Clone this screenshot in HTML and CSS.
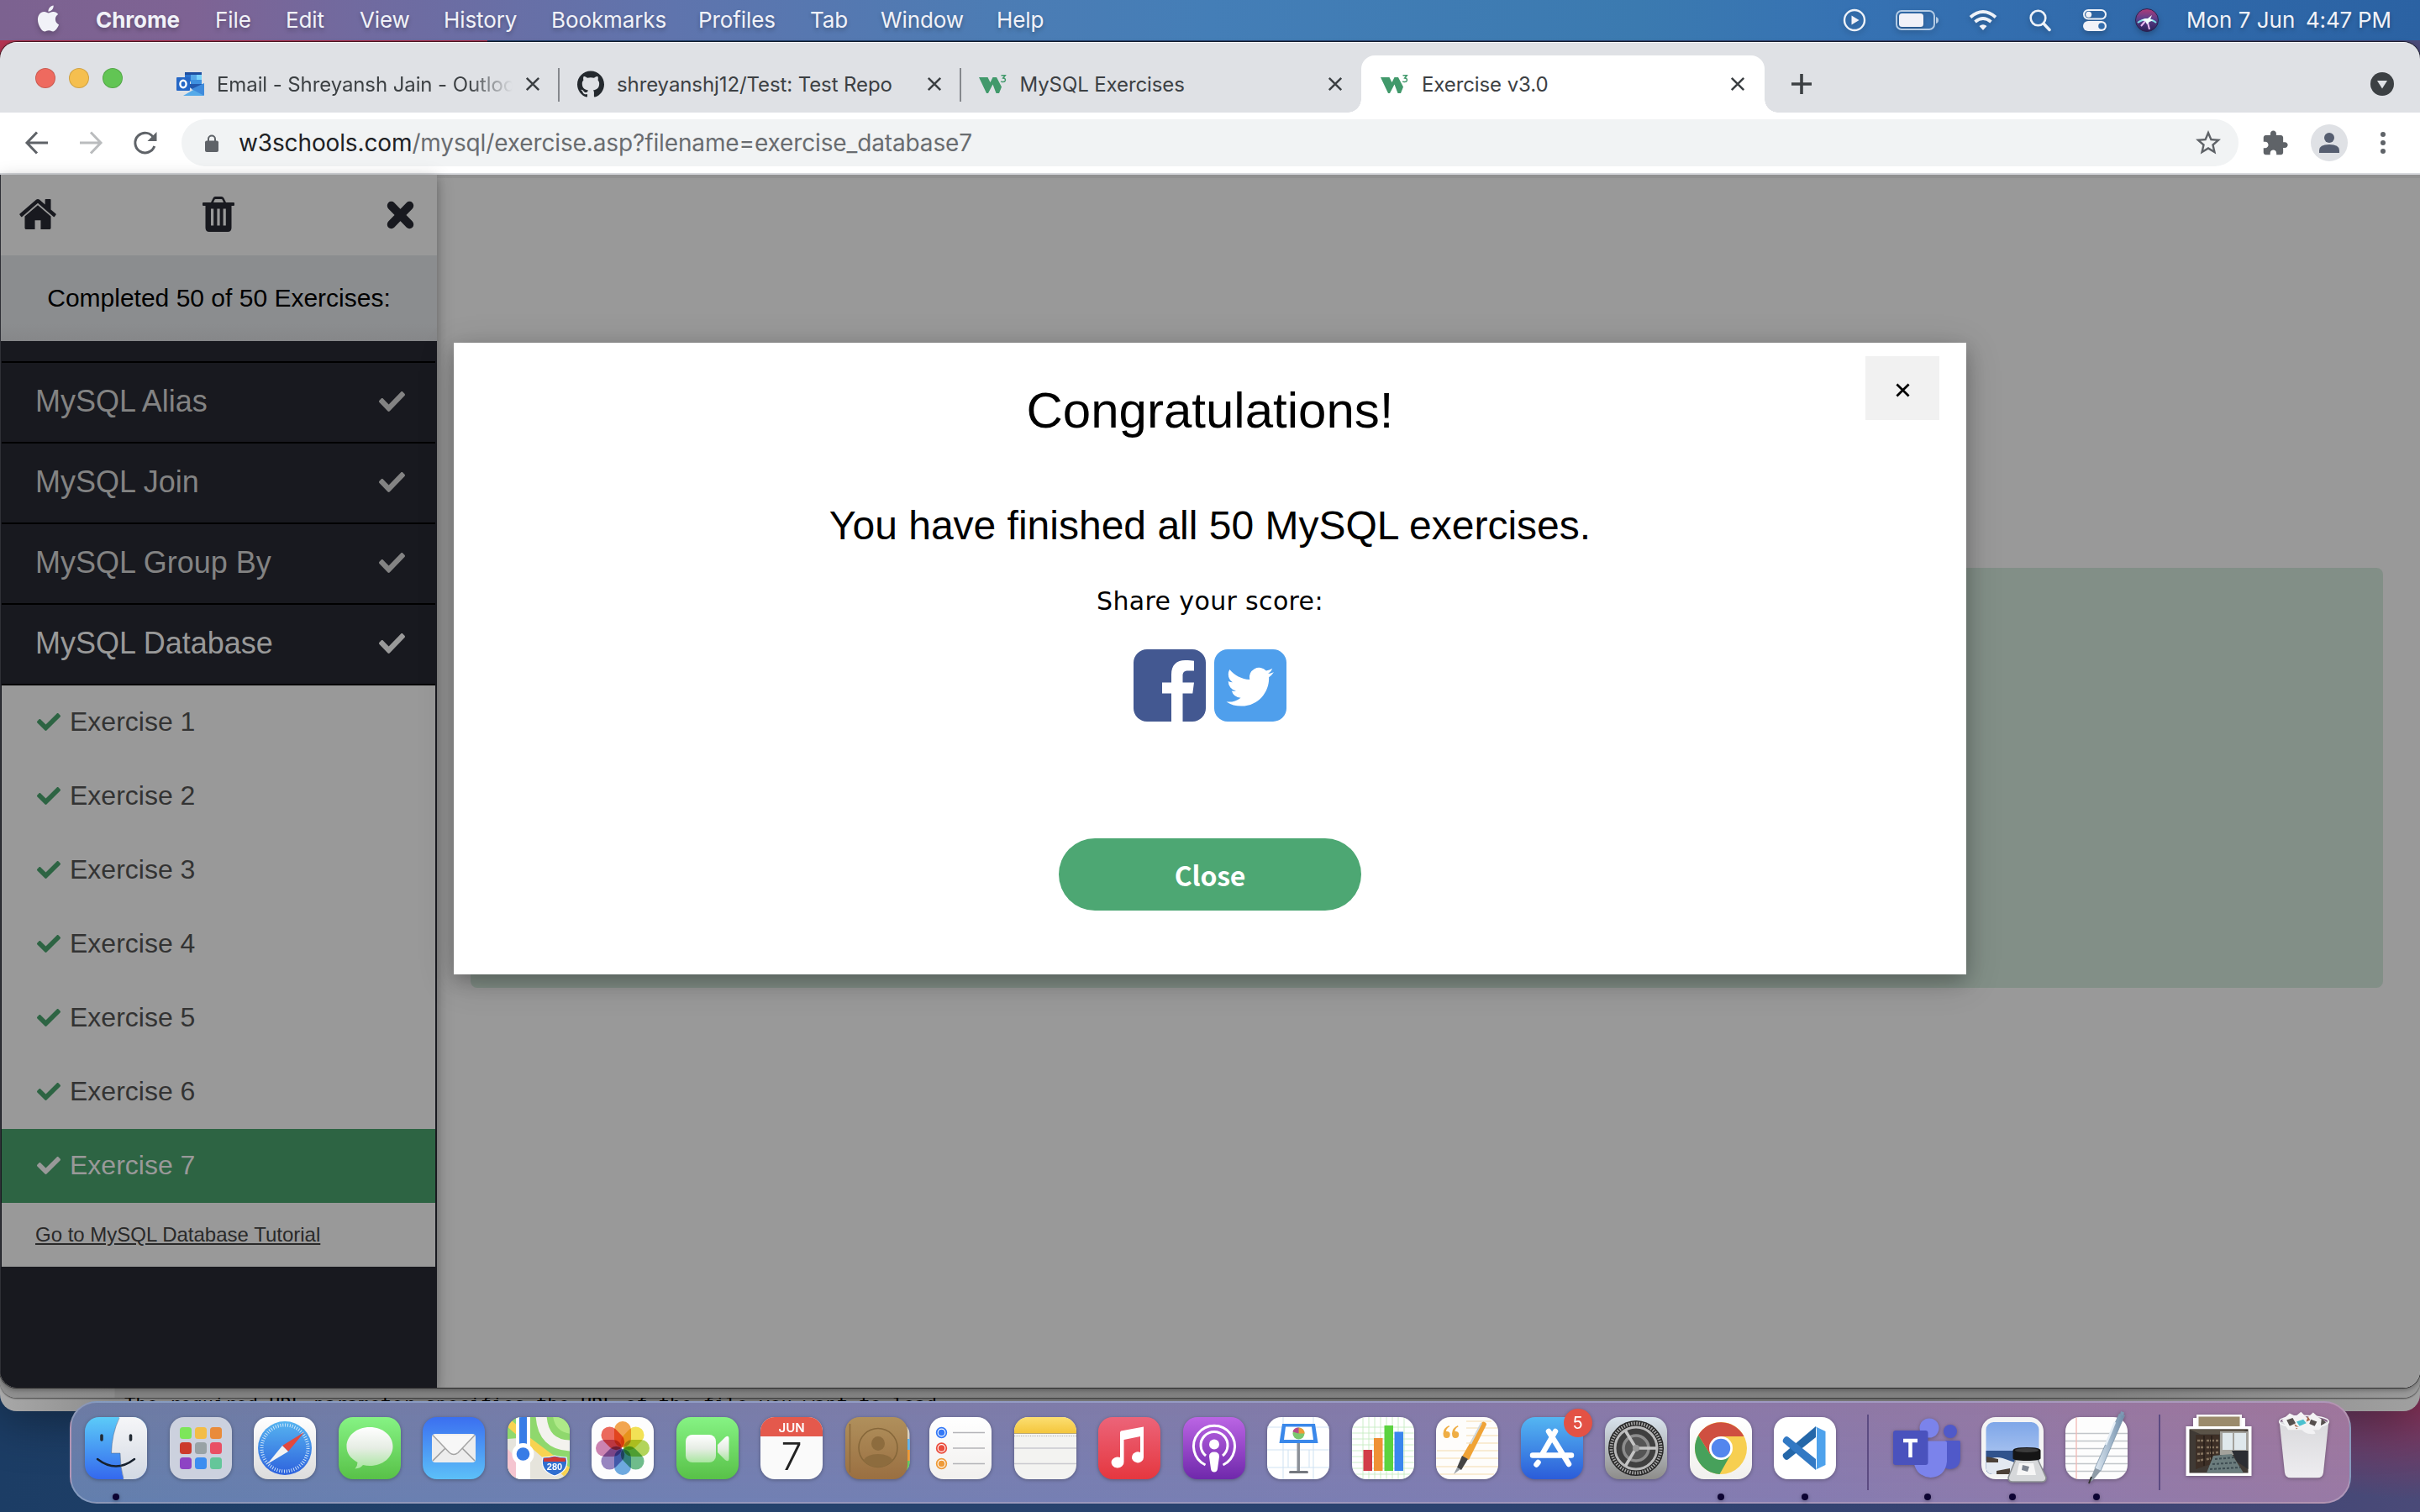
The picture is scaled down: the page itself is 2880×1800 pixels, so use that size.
FILE: index.html
```html
<!DOCTYPE html>
<html lang="en">
<head>
<meta charset="utf-8">
<title>Exercise v3.0</title>
<link rel="stylesheet" href="styles.css">
</head>
<body>
<svg class="defs" aria-hidden="true">
  <defs>
    <symbol id="check" viewBox="0 65 512 382" preserveAspectRatio="none"><path d="M173.898 439.404l-166.4-166.4c-9.997-9.997-9.997-26.206 0-36.204l36.203-36.204c9.997-9.998 26.207-9.998 36.204 0L192 312.69 432.095 72.596c9.997-9.997 26.207-9.997 36.204 0l36.203 36.204c9.997 9.997 9.997 26.206 0 36.204l-294.4 294.401c-9.998 9.997-26.207 9.997-36.204-.001z"/></symbol>
    <symbol id="cross" viewBox="0 0 20 20"><path d="M2 2L18 18M18 2L2 18" fill="none" stroke="currentColor" stroke-width="2.8"/></symbol>
    <symbol id="w3" viewBox="0 0 34 28"><path d="M0 6h10.500l3 6 3-6h4.500l6 11.500-3 7.500h-3.500l-4-10.500-5.500 10.500H9z"/><path d="M26.500 3.700h4.800l-2.600 3.300q3.100.3 2.700 2.700-.5 2-3 1.900-1.400-.1-2.200-.9" fill="none" stroke="currentColor" stroke-width="1.500"/></symbol>
    <linearGradient id="gFinder" x2="0" y2="1"><stop offset="0" stop-color="#5ccbf8"/><stop offset="1" stop-color="#3468ee"/></linearGradient>
    <linearGradient id="gFace" x2="0" y2="1"><stop offset="0" stop-color="#f6f6f8"/><stop offset="1" stop-color="#d2d9e3"/></linearGradient>
    <linearGradient id="gWhite" x2="0" y2="1"><stop offset="0" stop-color="#fff"/><stop offset="1" stop-color="#dcdcdc"/></linearGradient>
    <linearGradient id="gPaper" x2="0" y2="1"><stop offset="0" stop-color="#fff"/><stop offset="1" stop-color="#f1f0ee"/></linearGradient>
    <linearGradient id="gGreen" x2="0" y2="1"><stop offset="0" stop-color="#86f384"/><stop offset="1" stop-color="#58c148"/></linearGradient>
    <linearGradient id="gBubble" x2="0" y2="1"><stop offset="0" stop-color="#fff"/><stop offset=".5" stop-color="#e6ede4"/><stop offset="1" stop-color="#a9e6a0"/></linearGradient>
    <linearGradient id="gMail" x2="0" y2="1"><stop offset="0" stop-color="#3b6ff0"/><stop offset="1" stop-color="#5cc0f8"/></linearGradient>
    <linearGradient id="gDial" x2="0" y2="1"><stop offset="0" stop-color="#56b4f0"/><stop offset="1" stop-color="#2e62dd"/></linearGradient>
    <linearGradient id="gBook" x2="0" y2="1"><stop offset="0" stop-color="#b0905c"/><stop offset="1" stop-color="#9a6f41"/></linearGradient>
    <linearGradient id="gNote" x2="0" y2="1"><stop offset="0" stop-color="#fcdf72"/><stop offset="1" stop-color="#f4c63c"/></linearGradient>
    <linearGradient id="gMusic" x2="0" y2="1"><stop offset="0" stop-color="#ec6479"/><stop offset="1" stop-color="#e5373f"/></linearGradient>
    <linearGradient id="gPod" x2="0" y2="1"><stop offset="0" stop-color="#bb65e4"/><stop offset="1" stop-color="#6f28ab"/></linearGradient>
    <linearGradient id="gStore" x2="0" y2="1"><stop offset="0" stop-color="#54b6f2"/><stop offset="1" stop-color="#2b5cd9"/></linearGradient>
    <linearGradient id="gPref" x2="0" y2="1"><stop offset="0" stop-color="#d9e4ee"/><stop offset="1" stop-color="#8d8c8a"/></linearGradient>
    <linearGradient id="gSky" x2="0" y2="1"><stop offset="0" stop-color="#7ea6e8"/><stop offset="1" stop-color="#bed2f4"/></linearGradient>
    <linearGradient id="gPen" x2="1" y2="0"><stop offset="0" stop-color="#dfe9f2"/><stop offset="1" stop-color="#6b8aa8"/></linearGradient>
    <linearGradient id="gBin" x2="0" y2="1"><stop offset="0" stop-color="#d9d9dc"/><stop offset="1" stop-color="#eeedf0"/></linearGradient>
    <linearGradient id="gSiri" x2="0" y2="1"><stop offset="0" stop-color="#b03a78"/><stop offset=".45" stop-color="#5a3f8c"/><stop offset="1" stop-color="#2b1f55"/></linearGradient>
    <clipPath id="tile"><rect width="74" height="74" rx="17"/></clipPath>
  </defs>
</svg>

<div class="desktop">
  <header class="menubar">
    <svg class="apple" viewBox="1.500 0 21 24"><path d="M12.152 6.896c-.948 0-2.415-1.078-3.960-1.040-2.040.027-3.910 1.183-4.961 3.014-2.117 3.675-.546 9.103 1.519 12.090 1.013 1.454 2.208 3.090 3.792 3.039 1.520-.065 2.090-.987 3.935-.987 1.831 0 2.350.987 3.960.948 1.637-.026 2.676-1.480 3.676-2.948 1.156-1.688 1.636-3.325 1.662-3.415-.039-.013-3.182-1.221-3.220-4.857-.026-3.040 2.480-4.494 2.597-4.559-1.429-2.090-3.623-2.324-4.390-2.376-2-.156-3.675 1.090-4.610 1.090zM15.530 3.830c.843-1.012 1.400-2.427 1.245-3.830-1.207.052-2.662.805-3.532 1.818-.780.896-1.454 2.338-1.273 3.714 1.338.104 2.715-.688 3.559-1.701"/></svg>
    <nav class="menus"><span class="app">Chrome</span><span>File</span><span>Edit</span><span>View</span><span>History</span><span>Bookmarks</span><span>Profiles</span><span>Tab</span><span>Window</span><span>Help</span></nav>
    <div class="status">
      <svg width="28" height="28" viewBox="0 0 28 28"><circle cx="14" cy="14" r="12" fill="none" stroke="#eef2f8" stroke-width="2.400"/><path d="M10.500 8.500v11l9-5.500z"/></svg>
      <svg class="s-batt" width="52" height="24" viewBox="0 0 52 24"><rect x="1" y="1" width="45" height="22" rx="6" fill="none" stroke="#b3cbe4" stroke-width="2"/><rect x="4" y="4" width="29" height="16" rx="3.500"/><path d="M48 8q3 1 3 4t-3 4z" fill="#b3cbe4"/></svg>
      <svg class="s-wifi" width="34" height="24" viewBox="0 0 34 24"><path d="M17 24l-4.500-5q4.500-3.500 9 0z"/><path d="M2 8.500q15-13 30 0M7.500 14q9.500-8 19 0" fill="none" stroke="#eef2f8" stroke-width="3.800"/></svg>
      <svg class="s-find" width="26" height="26" viewBox="0 0 26 26"><circle cx="10.500" cy="10.500" r="8.800" fill="none" stroke="#eef2f8" stroke-width="2.600"/><path d="M17 17l7 7.500" stroke="#eef2f8" stroke-width="3.500" stroke-linecap="round"/></svg>
      <svg class="s-ctl" width="28" height="26" viewBox="0 0 28 26"><rect x="1" y="1" width="26" height="10.500" rx="5.200" fill="none" stroke="#eef2f8" stroke-width="2"/><circle cx="6.700" cy="6.200" r="3.500"/><rect y="14" width="28" height="12" rx="6"/><circle cx="22" cy="20" r="3.800" fill="#336cab"/></svg>
      <svg class="s-siri" width="28" height="28" viewBox="0 0 28 28"><circle cx="14" cy="14" r="13.500" fill="url(#gSiri)" stroke="#2a2350"/><path d="M3 17Q9 13 14 13Q20 13 25 17" stroke="#7fe0e6" stroke-width="2" fill="none"/><path d="M14 13L7 21M14 13l3 12" stroke="#e9b9f0" stroke-width="2" fill="none"/><path d="M15 12l5-4-2 5 4 1-5 2-3 3-2-4-5-1 5-2z" fill="#effffd"/></svg>
      <span class="date">Mon 7 Jun</span><span class="time">4:47 PM</span>
    </div>
  </header>

  <div class="window back2"><p>The required URL parameter specifies the URL of the file you want to load</p></div>
  <div class="window back1"></div>

  <section class="window browser">
    <div class="tabstrip">
      <div class="lights"><i class="red"></i><i class="amber"></i><i class="green"></i></div>
      <div class="tab">
        <svg width="33" height="28" viewBox="0 0 33 28"><path fill="#1f4fa0" d="M10 0h20v8H10z"/><path fill="#2a72cf" d="M10 3h10v8H10z"/><path fill="#56a7e8" d="M17 3h7v6h-7z"/><path fill="#7bd3fb" d="M24 3h6v7h-6z"/><path fill="#3f91e0" d="M17 9h13v9H17z"/><path fill="#2258ad" d="M10 14h22l-12 7z"/><path fill="#55aae9" d="M8 28h24V14z"/><path fill="#3f8bdc" d="M33 13v15L18 20z"/><rect y="6" width="16" height="16" rx="1" fill="#2567c6"/><ellipse cx="8" cy="14" rx="3.600" ry="4.200" fill="none" stroke="#fff" stroke-width="2.400"/></svg>
        <span class="title fade">Email - Shreyansh Jain - Outlook</span><svg class="x"><use href="#cross"/></svg>
      </div>
      <div class="tab ruled">
        <svg width="32" height="32" viewBox="0 0 24 24" fill="#24292e"><path d="M12 .297c-6.630 0-12 5.373-12 12 0 5.303 3.438 9.800 8.205 11.385.6.113.82-.258.82-.577 0-.285-.01-1.040-.015-2.040-3.338.724-4.042-1.610-4.042-1.610C4.422 18.070 3.633 17.700 3.633 17.700c-1.087-.744.084-.729.084-.729 1.205.084 1.838 1.236 1.838 1.236 1.070 1.835 2.809 1.305 3.495.998.108-.776.417-1.305.76-1.605-2.665-.3-5.466-1.332-5.466-5.930 0-1.310.465-2.380 1.235-3.220-.135-.303-.54-1.523.105-3.176 0 0 1.005-.322 3.300 1.230.96-.267 1.980-.399 3-.405 1.020.006 2.040.138 3 .405 2.280-1.552 3.285-1.230 3.285-1.230.645 1.653.24 2.873.12 3.176.765.84 1.230 1.910 1.230 3.220 0 4.610-2.805 5.625-5.475 5.920.42.36.81 1.096.81 2.220 0 1.606-.015 2.896-.015 3.286 0 .315.21.69.825.57C20.565 22.092 24 17.592 24 12.297c0-6.627-5.373-12-12-12"/></svg>
        <span class="title">shreyanshj12/Test: Test Repo</span><svg class="x"><use href="#cross"/></svg>
      </div>
      <div class="tab ruled">
        <svg class="w3" width="34" height="28"><use href="#w3"/></svg>
        <span class="title">MySQL Exercises</span><svg class="x"><use href="#cross"/></svg>
      </div>
      <div class="tab active">
        <svg class="w3" width="34" height="28"><use href="#w3"/></svg>
        <span class="title">Exercise v3.0</span><svg class="x"><use href="#cross"/></svg>
      </div>
      <svg class="plus" width="24" height="24" viewBox="0 0 24 24"><path d="M12 0v24M0 12h24" stroke="#3c4043" stroke-width="3.600"/></svg>
      <svg class="drop" width="28" height="28" viewBox="0 0 28 28"><circle cx="14" cy="14" r="14" fill="#3c4043"/><path d="M8 10h12l-6 9.500z" fill="#dfe1e5"/></svg>
    </div>

    <div class="toolbar">
      <svg class="back" viewBox="0 0 28 28"><path d="M27 14H3M14 1.500L2 14l12 12.500" fill="none" stroke="#5f6368" stroke-width="3"/></svg>
      <svg class="fwd" viewBox="0 0 28 28"><path d="M1 14h24M14 1.500L26 14 14 26.500" fill="none" stroke="#babcbe" stroke-width="3"/></svg>
      <svg class="reload" viewBox="0 0 28 28"><path d="M24 8.300A11.800 11.800 0 1 0 24.800 18" fill="none" stroke="#5f6368" stroke-width="3"/><path d="M27.500 1v11H16.500z" fill="#5f6368"/></svg>
      <div class="omnibox">
        <svg class="lock" viewBox="0 0 16 21"><rect y="7.500" width="16" height="13.500" rx="2" fill="#5f6368"/><path d="M4 8V5.500a4 4 0 0 1 8 0V8" fill="none" stroke="#5f6368" stroke-width="2"/></svg>
        <span class="url"><b>w3schools.com</b>/mysql/exercise.asp?filename=exercise_database7</span>
        <svg class="star" viewBox="0 0 24 24"><path d="M22 9.240l-7.190-.620L12 2 9.190 8.630 2 9.240l5.460 4.730L5.820 21 12 17.270 18.180 21l-1.630-7.030L22 9.240zM12 15.400l-3.760 2.270 1-4.280-3.320-2.880 4.380-.380L12 6.100l1.710 4.040 4.380.380-3.320 2.880 1 4.280L12 15.400z"/></svg>
      </div>
      <svg class="ext" viewBox="0 0 24 24"><path d="M20.500 11H19V7c0-1.100-.9-2-2-2h-4V3.500C13 2.120 11.880 1 10.500 1S8 2.120 8 3.500V5H4c-1.100 0-1.990.9-1.990 2v3.800H3.500c1.490 0 2.700 1.210 2.700 2.700s-1.210 2.700-2.700 2.700H2V20c0 1.100.9 2 2 2h3.800v-1.500c0-1.490 1.210-2.700 2.700-2.700 1.490 0 2.700 1.210 2.700 2.700V22H17c1.100 0 2-.9 2-2v-4h1.500c1.380 0 2.500-1.120 2.500-2.500S21.880 11 20.500 11z"/></svg>
      <svg class="avatar" viewBox="0 0 44 44"><circle cx="22" cy="22" r="22" fill="#dfe1e5"/><circle cx="22" cy="16" r="6" fill="#565e70"/><path d="M10 34v-3q0-7 12-7t12 7v3z" fill="#565e70"/></svg>
      <svg class="dots" viewBox="0 0 6 26"><circle cx="3" cy="3" r="3"/><circle cx="3" cy="13" r="3"/><circle cx="3" cy="23" r="3"/></svg>
    </div>

    <div class="page">
      <aside class="sidebar">
        <div class="tools">
          <svg class="home" viewBox="80 253 1632 1283" preserveAspectRatio="none"><path d="M1472 992v480q0 26-19 45t-45 19h-384v-384h-256v384h-384q-26 0-45-19t-19-45v-480q0-1 .5-3t.5-3l575-474 575 474q1 2 1 6zm223-69l-62 74q-8 9-21 11h-3q-13 0-21-7l-692-577-692 577q-12 8-24 7-13-2-21-11l-62-74q-8-10-7-23.500t11-21.500l719-599q32-26 76-26t76 26l244 204v-195q0-14 9-23t23-9h192q14 0 23 9t9 23v408l219 182q10 8 11 21.500t-7 23.500z"/></svg>
          <svg class="trash" viewBox="0 0 38 42"><path fill-rule="evenodd" d="M0 8q0-1 1-1h9l2.500-5q1-2 3-2h7q2 0 3 2L28 7h9q1 0 1 1v2q0 1-1 1h-2.500v26q0 5-4.500 5H8q-4.500 0-4.500-5V11H1q-1 0-1-1zM13 7h12l-1.500-3.500q-.3-.6-1-.6h-7q-.7 0-1 .6zM10 14.500v20h3.200v-20zM17.400 14.500v20h3.200v-20zM24.600 14.500v20h3.200v-20z"/></svg>
          <svg class="close" viewBox="0 0 32 32" preserveAspectRatio="none"><path d="M5.500 5.500l21 21M26.500 5.500l-21 21" stroke="#18191f" stroke-width="9.500" stroke-linecap="round"/></svg>
        </div>
        <div class="done">Completed 50 of 50 Exercises:</div>
        <div class="stub"></div>
        <div class="topic">MySQL Alias<svg><use href="#check"/></svg></div>
        <div class="topic">MySQL Join<svg><use href="#check"/></svg></div>
        <div class="topic">MySQL Group By<svg><use href="#check"/></svg></div>
        <div class="topic open">MySQL Database<svg><use href="#check"/></svg></div>
        <div class="exercises">
          <div class="ex"><svg><use href="#check"/></svg>Exercise 1</div>
          <div class="ex"><svg><use href="#check"/></svg>Exercise 2</div>
          <div class="ex"><svg><use href="#check"/></svg>Exercise 3</div>
          <div class="ex"><svg><use href="#check"/></svg>Exercise 4</div>
          <div class="ex"><svg><use href="#check"/></svg>Exercise 5</div>
          <div class="ex"><svg><use href="#check"/></svg>Exercise 6</div>
          <div class="ex current"><svg><use href="#check"/></svg>Exercise 7</div>
          <div class="tutorial"><a>Go to MySQL Database Tutorial</a></div>
        </div>
      </aside>
      <main class="main"><div class="panel"></div></main>

      <div class="modal">
        <div class="modal-x"><svg viewBox="0 0 18 18"><path d="M1.500 1.500l15 15M16.500 1.500l-15 15" stroke="#000" stroke-width="2.900"/></svg></div>
        <h1>Congratulations!</h1>
        <h2>You have finished all 50 MySQL exercises.</h2>
        <p>Share your score:</p>
        <div class="share">
          <svg viewBox="0 0 86 86"><rect width="86" height="86" rx="16" fill="#435891"/><path fill="#fff" d="M45 86V52.500H34V39.500h11V30c0-11.500 6.500-17 16.500-17 4.500 0 8 .4 10.500.7v11.800h-7c-5.500 0-6.500 2.500-6.500 6.500v7.500H72l-1.700 13H58.500V86z"/></svg>
          <svg viewBox="0 0 86 86"><rect width="86" height="86" rx="16" fill="#4f9fec"/><path transform="translate(14.500 16.500) scale(2.350)" fill="#fff" d="M23.953 4.570a10 10 0 01-2.825.775 4.958 4.958 0 002.163-2.723c-.951.555-2.005.959-3.127 1.184a4.920 4.920 0 00-8.384 4.482C7.690 8.095 4.067 6.130 1.640 3.162a4.822 4.822 0 00-.666 2.475c0 1.710.870 3.213 2.188 4.096a4.904 4.904 0 01-2.228-.616v.06a4.923 4.923 0 003.946 4.827 4.996 4.996 0 01-2.212.085 4.936 4.936 0 004.604 3.417 9.867 9.867 0 01-6.102 2.105c-.390 0-.779-.023-1.170-.067a13.995 13.995 0 007.557 2.209c9.053 0 13.998-7.496 13.998-13.985 0-.210 0-.420-.015-.630A9.935 9.935 0 0024 4.590z"/></svg>
        </div>
        <button type="button">Close</button>
      </div>
    </div>
  </section>

  <footer class="dock">
    <div class="app-icon running"><svg viewBox="0 0 74 74"><g clip-path="url(#tile)"><rect width="74" height="74" fill="url(#gFinder)"/><path d="M41 0Q32 20 31.500 43h10.500Q42 60 46 74h28V0z" fill="url(#gFace)"/></g><path d="M20 22v5M54.500 22v5" stroke="#222a33" stroke-width="3.600" stroke-linecap="round"/><path d="M15 50q22 17 44 0" fill="none" stroke="#16202c" stroke-width="2.500" stroke-linecap="round"/><path d="M41 1Q32 20 31.500 43H42Q42 60 46 73" fill="none" stroke="#445f85" stroke-opacity=".5" stroke-width="1"/></svg></div>
    <div class="app-icon"><svg viewBox="0 0 74 74"><rect width="74" height="74" rx="17" fill="#ccd1de"/><g><rect x="12" y="12" width="14" height="14" rx="3.500" fill="#7de65a"/><rect x="30" y="12" width="14" height="14" rx="3.500" fill="#f3bd47"/><rect x="48" y="12" width="14" height="14" rx="3.500" fill="#e98b3a"/><rect x="12" y="30" width="14" height="14" rx="3.500" fill="#cc3a2c"/><rect x="30" y="30" width="14" height="14" rx="3.500" fill="#98a2a5"/><rect x="48" y="30" width="14" height="14" rx="3.500" fill="#e95064"/><rect x="12" y="48" width="14" height="14" rx="3.500" fill="#8d43c4"/><rect x="30" y="48" width="14" height="14" rx="3.500" fill="#3c8df0"/><rect x="48" y="48" width="14" height="14" rx="3.500" fill="#64c69a"/></g></svg></div>
    <div class="app-icon"><svg viewBox="0 0 74 74"><rect width="74" height="74" rx="17" fill="url(#gWhite)"/><circle cx="37" cy="37" r="32" fill="url(#gDial)"/><circle cx="37" cy="37" r="27.500" fill="none" stroke="#d9ecfb" stroke-width="4" stroke-dasharray=".9 1.980"/><path d="M60 18L41 41l-7-7z" fill="#e2483d"/><path d="M16 56l18-22 7 7z" fill="#f3f3f3"/></svg></div>
    <div class="app-icon"><svg viewBox="0 0 74 74"><rect width="74" height="74" rx="17" fill="url(#gGreen)"/><path d="M37 12c15.500 0 27.500 10 27.500 23S52.500 58 37 58q-4 0-8-1-3 4-9.500 4.500 3-3.500 3-7.500C14 49 9.500 43 9.500 35 9.500 22 21.500 12 37 12z" fill="url(#gBubble)"/></svg></div>
    <div class="app-icon"><svg viewBox="0 0 74 74"><rect width="74" height="74" rx="17" fill="url(#gMail)"/><rect x="11" y="20" width="52" height="34" rx="4" fill="#ededed"/><path d="M12 52l17-17M62 52L45 35" stroke="#9b9b9b" stroke-width="1.500"/><path d="M12 21.500l20 21q5 4 10 0l20-21" fill="#f7f7f7" stroke="#a4a4a4" stroke-width="1.500"/></svg></div>
    <div class="app-icon"><svg viewBox="0 0 74 74"><g clip-path="url(#tile)"><rect width="74" height="74" fill="#8fd86d"/><path d="M0 26v48h74V66L26 24z" fill="#e6e4dc"/><path d="M0 38v36h12V50z" fill="#f5c5d0"/><path d="M-2 10L76 78V60L26 22 0 0z" fill="#f8d351"/><path d="M26 0v24l24 18 24 18V0z" fill="#8fd86d"/><path d="M40-2q2 36 36 36" fill="none" stroke="#f3f2ee" stroke-width="13"/><path d="M54-2q2 20 22 22V-2z" fill="#aee988"/><rect x="10" width="17" height="74" fill="#fff"/><rect x="14" width="9" height="38" fill="#377ce6"/></g><circle cx="18.500" cy="44" r="13" fill="#fff"/><circle cx="18.500" cy="44" r="7.800" fill="#377ce6"/><path d="M42 48q7 0 14-2 7 2 14 2 4 16-14 22-18-6-14-22z" fill="#2f6ed0" stroke="#fff" stroke-width="1.200"/><path d="M43 49q7 0 13-2 7 2 13 2v4H43z" fill="#cf3934"/><text x="56" y="63" text-anchor="middle" class="shield">280</text></svg></div>
    <div class="app-icon"><svg viewBox="0 0 74 74"><rect width="74" height="74" rx="17" fill="#fdfdfd"/><g transform="translate(37 37)" class="petals"><rect x="-10" y="-32" width="20" height="31" rx="10" fill="#f29a38"/><rect x="-10" y="-32" width="20" height="31" rx="10" fill="#f3df3e" transform="rotate(45)"/><rect x="-10" y="-32" width="20" height="31" rx="10" fill="#aad044" transform="rotate(90)"/><rect x="-10" y="-32" width="20" height="31" rx="10" fill="#5cb57c" transform="rotate(135)"/><rect x="-10" y="-32" width="20" height="31" rx="10" fill="#5b9fdd" transform="rotate(180)"/><rect x="-10" y="-32" width="20" height="31" rx="10" fill="#8a75b9" transform="rotate(225)"/><rect x="-10" y="-32" width="20" height="31" rx="10" fill="#c673a8" transform="rotate(270)"/><rect x="-10" y="-32" width="20" height="31" rx="10" fill="#ea5547" transform="rotate(315)"/></g></svg></div>
    <div class="app-icon"><svg viewBox="0 0 74 74"><rect width="74" height="74" rx="17" fill="url(#gGreen)"/><rect x="11" y="21" width="36" height="33" rx="8" fill="url(#gBubble)"/><path d="M49 33l9-9q4-3 4.500 1v25q-.5 4-4.500 1l-9-9z" fill="url(#gBubble)"/></svg></div>
    <div class="app-icon"><div class="cal"><b>JUN</b><span>7</span></div></div>
    <div class="app-icon"><svg viewBox="0 0 74 74"><path d="M66 8q10 2 10.500 12v34Q76 64 66 66z" fill="#d9d3c4"/><path d="M70 26h6.700v13H70z" fill="#5fb4ef"/><path d="M70 39h6.700v13H70z" fill="#f09a34"/><path d="M70 52h6.700q0 10-6.700 13z" fill="#67cc5c"/><rect width="74" height="74" rx="17" fill="url(#gBook)"/><path d="M5.500 8v58" stroke="#8a683c" stroke-width="1.500"/><circle cx="39" cy="36.500" r="23" fill="none" stroke="#86673a" stroke-width="1.600"/><ellipse cx="39" cy="31.500" rx="8" ry="8.500" fill="#8d6c3e"/><path d="M21.500 51.500q4-7.500 17.500-7.500t17.500 7.500q-7 8-17.500 8t-17.500-8z" fill="#8d6c3e"/></svg></div>
    <div class="app-icon"><svg viewBox="0 0 74 74"><rect width="74" height="74" rx="17" fill="url(#gPaper)"/><g fill="#fff" stroke-width="1.800"><circle cx="14.500" cy="18.500" r="5.800" stroke="#3478f6"/><circle cx="14.500" cy="37" r="5.800" stroke="#ea4d3d"/><circle cx="14.500" cy="55.500" r="5.800" stroke="#ee9a38"/></g><circle cx="14.500" cy="18.500" r="3.800" fill="#3478f6"/><circle cx="14.500" cy="37" r="3.800" fill="#ea4d3d"/><circle cx="14.500" cy="55.500" r="3.800" fill="#ee9a38"/><path d="M28 18.500h38M28 37h38M28 55.500h38" stroke="#b4b4b8" stroke-width="1.600"/></svg></div>
    <div class="app-icon"><svg viewBox="0 0 74 74"><g clip-path="url(#tile)"><rect width="74" height="74" fill="#f3f3f1"/><rect width="74" height="19" fill="url(#gNote)"/><path d="M0 19.500h74" stroke="#b9a775" stroke-width="1.200"/><path d="M0 22.500h74" stroke="#a9a9a9" stroke-width="1.200" stroke-dasharray="1.200 1.500"/><path d="M0 37h74M0 55.500h74" stroke="#c9c9cf" stroke-width="1.500"/></g></svg></div>
    <div class="app-icon"><svg viewBox="0 0 74 74"><rect width="74" height="74" rx="17" fill="url(#gMusic)"/><path d="M27 16.500L54 11.500V48a7 6.500 0 1 1-4-6V23L30.500 27V53.500a7.500 6.500 0 1 1-4.500-5.500V18z" fill="#fff"/></svg></div>
    <div class="app-icon"><svg viewBox="0 0 74 74"><rect width="74" height="74" rx="17" fill="url(#gPod)"/><g fill="none" stroke="#fff" stroke-width="3"><path d="M26.500 57a24.500 24.500 0 1 1 21 0"/><path d="M27 46a16 16 0 1 1 20 0"/></g><circle cx="37" cy="32.500" r="6" fill="#fff"/><path d="M31 47q0-5.500 6-5.500t6 5.500l-2 14.500q-.5 4-4 4t-4-4z" fill="#fff"/></svg></div>
    <div class="app-icon"><svg viewBox="0 0 74 74"><rect width="74" height="74" rx="17" fill="#fff"/><path d="M19 0v74M55 0v74M0 12h74M0 39h74M0 60h74M25 39v21M50 39v21" stroke="#cfe2f2" stroke-width="1"/><rect x="35.500" y="30" width="3.500" height="35" fill="#8c9199"/><rect x="26" y="64" width="23" height="3" rx="1.500" fill="#75797f"/><path d="M18 8h39l3.500 23H14.500z" fill="#3a88ea"/><path d="M22 11.500h31l2 15.500H20z" fill="#fff"/><circle cx="37.500" cy="19.500" r="7" fill="#7bc86e"/><path d="M37.500 19.500v-7a7 7 0 0 1 7 7z" fill="#ef9a37"/><path d="M37.500 19.500l-7-2a7 7 0 0 1 7-5z" fill="#ba4a87"/></svg></div>
    <div class="app-icon"><svg viewBox="0 0 74 74"><rect width="74" height="74" rx="17" fill="#fff"/><path d="M13 1v72M20 0v74M27 0v74M34 0v74M41 0v74M48 0v74M55 0v74M62 1v72M1 12h72M0 19h74M0 26h74M0 33h74M0 40h74M0 47h74M0 54h74M1 61h72M5 68h64" stroke="#c6ecc2" stroke-width=".9"/><path fill="#d23d48" d="M13.500 39h10.500v25H13.500z"/><path fill="#ef9136" d="M26 25h10.500v39H26z"/><path fill="#5bd33f" d="M38.500 10H49v54H38.500z"/><path fill="#3a86ee" d="M50.500 17.500H61V64H50.500z"/></svg></div>
    <div class="app-icon"><svg viewBox="0 0 74 74"><rect width="74" height="74" rx="17" fill="#fefdfb"/><path d="M36 5h30M36 13h37M36 22h38M36 31h38M1 40h73M0 49h74M0 59h74M5 68h64" stroke="#f4dcae" stroke-width="1.200"/><path d="M15.500 10q-7 3-7 9.500 0 5.500 4 5.500 4.200 0 4.200-4.200T12 17q0-3.500 4-5.500zM26 10q-7 3-7 9.500 0 5.500 4 5.500 4.200 0 4.200-4.200T22.500 17q0-3.500 4-5.500z" fill="#efae45"/><path d="M54 7q2-3 5.500 0L60 9 39 51l-8-4z" fill="#f0a336"/><path d="M54 7L41 32" stroke="#cfd8de" stroke-width="2"/><path d="M31 46l7 4-8 13-5-3z" fill="#444"/><path d="M25 60l4 2-8 6z" fill="#9aa0a6"/></svg></div>
    <div class="app-icon"><svg viewBox="0 0 74 74"><rect width="74" height="74" rx="17" fill="url(#gStore)"/><g stroke="#fff" stroke-width="6.500" stroke-linecap="round"><path d="M41 17L26 43M33 17l24 39M14 45.500h46M20.500 54l-2 2.500"/></g></svg><span class="badge">5</span></div>
    <div class="app-icon"><svg viewBox="0 0 74 74"><rect width="74" height="74" rx="17" fill="url(#gPref)"/><circle cx="37" cy="37" r="33" fill="#262626"/><circle cx="37" cy="37" r="29.500" fill="none" stroke="#a6a6a6" stroke-width="4" stroke-dasharray="1.600 1.490"/><circle cx="37" cy="37" r="25" fill="#3f3f3f" stroke="#b9b9b9" stroke-width="3"/><circle cx="37" cy="37" r="15" fill="#555" stroke="#8c8c8c" stroke-width="3.500"/><path d="M37 37h24M37 37L24.500 16.500M37 37L24.500 58" stroke="#c4c4c4" stroke-width="3.500"/><circle cx="37" cy="37" r="4" fill="#999"/></svg></div>
    <div class="app-icon running"><svg viewBox="0 0 74 74"><rect width="74" height="74" rx="17" fill="url(#gPaper)"/><circle cx="37" cy="37" r="31" fill="#f7cf51"/><path d="M10.200 21.500A31 31 0 0 0 35.500 68L49 44 37 37 24 44z" fill="#47a15b"/><path d="M10.200 21.500A31 31 0 0 1 64.500 23H37L24 44z" fill="#cf4f40"/><circle cx="37" cy="37" r="14" fill="#fff"/><circle cx="37" cy="37" r="11.200" fill="#5386ee"/></svg></div>
    <div class="app-icon running"><svg viewBox="0 0 74 74"><rect width="74" height="74" rx="17" fill="#fff"/><path d="M50 11L11 44q-1.500 3 2.500 6.500 2 1 4-.5L50 24z" fill="#2467a9"/><path d="M50 63L11 30q-1.500-3 2.500-6.500 2-1 4 .5L50 50z" fill="#3279c4"/><path d="M49 11l12.500 6V57L49 63q2-1 2-4V15q0-3-2-4z" fill="#4ea2ec"/></svg></div>
    <div class="sep"></div>
    <div class="app-icon running"><svg class="wide" viewBox="0 0 80 74"><circle cx="68" cy="17" r="8" fill="#5059c9"/><path d="M62 28h16.500q1.500 0 1.500 1.500V48q0 13-12 14-8-.5-10-5z" fill="#5059c9"/><circle cx="43" cy="13" r="11.500" fill="#7b83eb"/><path d="M32 28.500h30q2 0 2 2V53Q62 71 44.500 72 29 71 25 56z" fill="#7b83eb"/><rect x="0" y="16" width="41.500" height="41" rx="3" fill="#4a52bd"/><path d="M12 28h17M20.500 28v20" stroke="#fff" stroke-width="4.500"/></svg></div>
    <div class="app-icon running"><svg viewBox="0 0 74 74"><rect width="74" height="74" rx="17" fill="#f4f4f4"/><rect x="5.500" y="6" width="63" height="62" rx="9" fill="url(#gSky)"/><path d="M5.500 40h63v20q0 8-8 8h-47q-8 0-8-8z" fill="#30538c"/><path d="M5.500 52q10-6 20-3t20 8v11H13q-7.500-1-7.500-8z" fill="#e3e9f1"/><path d="M6 47l14 3v4H6zM18 64l16-3v7H18z" fill="#4c4137"/><path d="M41 50h26l10 22q0 5-5 5H37q-5 0-5-5z" fill="#d6d8da" stroke="#8c8f92" stroke-width="1.500"/><path d="M45 55h17l3 14H42z" fill="#f6f6f6"/><path d="M49 57l8 2-2 6-7-2z" fill="#7d8490"/><path d="M37.500 40q0-4 16.500-4t16.500 4v9q0 3-16.500 3t-16.500-3z" fill="#151515"/><ellipse cx="54" cy="39.500" rx="14" ry="2.500" fill="#3b3b3b"/></svg></div>
    <div class="app-icon running"><svg viewBox="0 0 74 74"><g clip-path="url(#tile)"><rect width="74" height="74" fill="#fdfdfd"/><path d="M0 19.500h74M0 28.500h74M0 37.500h74M0 46.500h74M0 55.500h74M0 64.500h74" stroke="#c2c6ca" stroke-width="1.300"/><path d="M13 0v74" stroke="#f3b8b4" stroke-width="1.300"/></g><path d="M64-4l6.500 2L42 64l-7-3z" fill="url(#gPen)" stroke="#7b93a8" stroke-width=".8"/><path d="M66-7l4 1.500-1 4-4-1.500z" fill="#7d98b4"/><path d="M59 6L48 33" stroke="#e4edf5" stroke-width="2.500"/><path d="M35 61l7 3-9 11-5 3z" fill="#8f9ba6"/><path d="M31 71l-3 8" stroke="#333" stroke-width="2"/></svg></div>
    <div class="sep"></div>
    <div class="app-icon"><svg viewBox="0 0 74 74"><path fill="#fff" d="M6 1h62v30H6z"/><path fill="#f8f8f8" d="M10-3h54v30H10z"/><path fill="#9b8b6c" d="M12.500-.5h49V12h-49z"/><rect x="-2.500" y="11" width="78" height="59" fill="#fff"/><path fill="#403a35" d="M1.500 14.500h70v52h-70z"/><path fill="#5b5348" d="M1.500 14.500h70l-14 6H15z"/><path fill="#3d2f26" d="M9 21h28v32L9 62z"/><path d="M11 28h25M11 36h25M11 44l25-2M11 52l24-4" stroke="#857460" stroke-width="2.500" stroke-dasharray="3 1 5 2"/><path d="M19 22v36M28 22v33" stroke="#2b211b" stroke-width="1.800"/><path fill="#a3a29c" d="M38 17h33.500v28H38z"/><path fill="#dfe8ec" d="M41 19h12v20H41zM55 19h14v20H55z"/><path fill="#6b7c7d" d="M30 46l22-2 14 22.500H22z"/><path d="M32 50l24-2M29 56l30-2M26 62l36-2" stroke="#3e4c52" stroke-width="2" stroke-dasharray="3 2"/><path fill="#2c2e33" d="M52 40h19.500v22L58 53z"/></svg></div>
    <div class="app-icon"><svg viewBox="0 0 74 82"><path d="M4.500 6h65l-7 67q-1 7-8 7h-35q-7 0-8-7z" fill="url(#gBin)"/><path d="M8 4l10-9 8 4 7-6 8 8 8-7 8 7 9 5-9 11H16z" fill="#f3f3f3"/><path d="M14 4l8-3 4 7-8 4zM46 3l8 3-3 6-7-3zM60 2l6 5-7 5z" fill="#56504e"/><path d="M27 6l9-3 4 5-9 4z" fill="#4cc1cf"/><path d="M24 9l6 4-3 3zM42-1l3 5-5 2z" fill="#a8684a"/><ellipse cx="37" cy="6" rx="32.500" ry="8" fill="none" stroke="#f4f4f6" stroke-width="1.800"/><path d="M30 12q20 1 22 10-14 3-22-10z" fill="#f2f2f4"/></svg></div>
  </footer>
</div>
</body>
</html>
```
FILE: styles.css
```css
* { box-sizing: border-box; }
body { margin: 0; font-family: "Inter", "Liberation Sans", sans-serif; }
svg { display: block; flex: none; overflow: visible; }
h1, h2, p { margin: 0; font-weight: 400; }
.defs { position: absolute; width: 0; height: 0; }

.desktop {
  position: relative;
  width: 2880px;
  height: 1800px;
  overflow: hidden;
  background:
    radial-gradient(ellipse 240px 110px at 2880px 1675px, #86335a 0%, rgba(134, 51, 90, 0) 100%),
    linear-gradient(180deg, #b23350 0, #b23350 110px, rgba(0, 0, 0, 0) 111px) 0 0 / 580px 200px no-repeat,
    linear-gradient(90deg, #1c3d65 0, #24426c 30%, #2d4270 65%, #3a4372 85%, #4a4a78 100%);
}

/* Menu bar */
.menubar {
  height: 48px;
  display: flex;
  align-items: center;
  padding: 0 37px 1px 44px;
  color: #f1f2f8;
  fill: #f1f2f8;
  font-size: 26px;
  background: linear-gradient(90deg, #7c6290 0, #7e6394 230px, #716a9f 420px, #5f74ad 800px, #4c7cb4 1180px, #447eb7 1440px, #3b7ab0 1950px, #3672b3 2200px, #2b62a3 2880px);
  text-shadow: 0 3px 5px rgba(0, 0, 0, .25);
}
.menubar svg { filter: drop-shadow(0 3px 3px rgba(0, 0, 0, .22)); }
.apple { width: 27px; height: 32px; margin-top: -3px; }
.menus {
  margin-left: 43px;
  display: grid;
  grid-template-columns: 142px 84px 88px 100px 128px 175px 133px 84px 138px 80px;
  white-space: nowrap;
  letter-spacing: -.1px;
}
.app { font-weight: 700; }
.status { margin-left: auto; display: flex; align-items: center; white-space: nowrap; }
.s-batt { margin-left: 35px; }
.s-wifi { margin-left: 35px; }
.s-find { margin-left: 38px; }
.s-ctl { margin-left: 38px; }
.s-siri { margin-left: 34px; }
.date { margin-left: 33px; width: 142px; }
.time { width: 99px; letter-spacing: -.2px; }

/* Windows */
.window { position: absolute; left: 0; width: 2880px; overflow: hidden; border-radius: 20px; }
.back2 { top: 1500px; height: 180px; background: linear-gradient(90deg, #a8a8a8 0, #8c8c8c 136px, #767676 500px, #767676 2300px, #a0a0a0 2880px); box-shadow: 0 10px 60px rgba(0, 0, 0, .4); }
.back2 p { font: 22px/26px "DejaVu Sans Mono", monospace; padding: 159px 0 0 148px; color: #000; white-space: nowrap; }
.back1 { top: 1500px; height: 164px; background: linear-gradient(90deg, #8f8f8f 0, #8a8a8a 136px, #818181 137px, #808080 2500px, #999 2880px); box-shadow: 0 1px 2px rgba(0, 0, 0, .6); }
.browser { top: 50px; height: 1602px; background: #dfe1e5; box-shadow: 0 0 0 1px rgba(0, 0, 0, .55), 0 2px 6px rgba(0, 0, 0, .4); }

.tabstrip { height: 84px; display: flex; align-items: flex-end; border-top: 1px solid #f7f7f8; }
.lights { width: 188px; height: 84px; padding: 31px 0 0 42px; display: flex; gap: 16px; }
.lights i { width: 24px; height: 24px; border-radius: 50%; border: 1px solid rgba(0, 0, 0, .15); }
.red { background: #ee6a5f; }
.amber { background: #f5bf4f; }
.green { background: #62c554; }
.tab { position: relative; width: 477px; height: 68px; padding: 0 22px 0 22px; display: flex; align-items: center; font-size: 24px; letter-spacing: -.1px; color: #3c4043; }
.tab.ruled { width: 477.500px; }
.ruled::before { content: ""; position: absolute; left: -1px; top: 15px; width: 2px; height: 40px; background: #85888d; }
.title { margin-left: 15px; flex: 1; white-space: nowrap; overflow: hidden; }
.fade { flex: none; width: 352px; -webkit-mask-image: linear-gradient(90deg, #000 300px, transparent 352px); mask-image: linear-gradient(90deg, #000 300px, transparent 352px); }
.x { width: 18px; height: 18px; color: #3c4043; margin-left: auto; }
.w3 { fill: #41996b; color: #41996b; }
.tab.active { width: 480px; padding: 0 23px; background: #fff; border-radius: 16px 16px 0 0; }
.active::before, .active::after { content: ""; position: absolute; bottom: 0; width: 16px; height: 16px; }
.active::before { left: -16px; background: radial-gradient(circle at 0 0, transparent 15.500px, #fff 16px); }
.active::after { right: -16px; background: radial-gradient(circle at 100% 0, transparent 15.500px, #fff 16px); }
.plus { margin: 0 0 22px 32px; }
.drop { margin: 0 31px 20px auto; }

.toolbar { height: 74px; background: #fff; border-bottom: 2px solid #d7d9dd; display: flex; align-items: center; fill: #5f6368; }
.back { width: 28px; height: 28px; margin-left: 30px; }
.fwd { width: 28px; height: 28px; margin-left: 36px; }
.reload { width: 28px; height: 28px; margin-left: 37px; }
.omnibox { width: 2448px; height: 56px; margin-left: 29px; border-radius: 28px; background: #f1f3f4; display: flex; align-items: center; padding: 0 18px 0 28px; }
.lock { width: 16px; height: 21px; }
.url { margin-left: 24px; font-size: 28px; letter-spacing: -.13px; color: #696c70; white-space: nowrap; }
.url b { font-weight: 400; color: #202124; }
.star { width: 36px; height: 36px; margin-left: auto; }
.ext { width: 33px; height: 33px; margin-left: 27px; }
.avatar { width: 44px; height: 44px; margin-left: 26px; }
.dots { width: 6px; height: 26px; margin-left: 39px; }

/* Page */
.page { position: relative; height: 1444px; display: flex; background: #999; font-family: "Liberation Sans", Arial, sans-serif; }
.sidebar { position: relative; z-index: 1; width: 520px; height: 1444px; background: #18191f; border-left: 1px solid #2f3036; box-shadow: 0 4px 10px rgba(0, 0, 0, .2), 0 4px 20px rgba(0, 0, 0, .2); }
.tools { height: 96px; background: #999; fill: #18191f; display: flex; justify-content: space-between; align-items: center; padding: 0 27px 2px 22px; }
.home { width: 44px; height: 36px; }
.trash { width: 38px; height: 42px; margin-left: -7px; }
.close { width: 33px; height: 34px; margin-top: 2px; }
.done { height: 102px; background: linear-gradient(#8b8d8f 80%, #868789 100%); font-size: 30px; display: flex; align-items: center; justify-content: center; color: #000; white-space: nowrap; }
.stub { height: 24px; }
.topic { height: 96px; margin: 0 2px 0 1px; border-top: 2px solid #000; display: flex; align-items: center; justify-content: space-between; padding: 0 36px 3px 40px; font-size: 36px; color: #838383; fill: #838383; }
.topic svg { width: 31px; height: 24px; margin-top: 1px; }
.open { color: #999; fill: #999; }
.exercises { margin: 0 2px 0 1px; border-top: 2px solid #000; background: #999; }
.ex { height: 88px; display: flex; align-items: center; gap: 11px; padding: 0 0 2px 42px; font-size: 32px; color: #333; fill: #2d6443; }
.ex:first-child { height: 88px; padding-bottom: 2px; }
.ex svg { width: 28px; height: 21px; }
.current { background: #2d6443; color: #999; fill: #999; }
.tutorial { height: 76px; display: flex; align-items: center; padding-left: 40px; font-size: 24px; color: #292929; }
.tutorial a { text-decoration: underline; }
.main { flex: 1; padding: 464px 44px 0 40px; border-top: 4px solid #919191; }
.panel { height: 500px; border-radius: 8px; background: #828f87; }

.modal { position: absolute; z-index: 2; left: 540px; top: 200px; width: 1800px; height: 752px; padding-top: 36px; background: #fff; display: flex; flex-direction: column; align-items: center; color: #000; box-shadow: 0 8px 20px rgba(0, 0, 0, .2), 0 8px 40px rgba(0, 0, 0, .19); }
.modal h1 { font-size: 60px; line-height: 90px; }
.modal h2 { margin-top: 56px; font-size: 48px; line-height: 72px; }
.modal p { margin-top: 31px; font: 30px/45px "DejaVu Sans", Verdana, sans-serif; letter-spacing: .35px; }
.share { margin-top: 35px; display: flex; gap: 10px; }
.share svg { width: 86px; height: 86px; }
.modal button { margin-top: 139px; width: 360px; height: 86px; border: 0; border-radius: 43px; background: #4da773; color: #fff; font: 700 32px/86px "Noto Sans CJK SC", "Noto Sans", sans-serif; letter-spacing: -.2px; padding: 0; }
.modal-x { position: absolute; right: 32px; top: 16px; width: 88px; height: 76px; background: #f1f1f1; display: flex; align-items: center; justify-content: center; padding-top: 5px; }
.modal-x svg { width: 17px; height: 17px; }

/* Dock */
.dock { position: absolute; left: 83px; top: 1668px; width: 2715px; height: 122px; border-radius: 32px; border: 2px solid rgba(255, 255, 255, .22); padding: 17px 0 0 16px; display: flex; gap: 26.500px;
  background: linear-gradient(180deg, rgba(150, 110, 140, .2), rgba(100, 130, 200, .15)), linear-gradient(90deg, #627ea9 0, #7180b0 25%, #7c7eb0 50%, #8a7bae 75%, #a2789f 100%); background-clip: border-box; }
.app-icon { position: relative; width: 74px; height: 74px; flex: none; filter: drop-shadow(0 1px 2px rgba(0, 0, 0, .3)); }
.app-icon svg { width: 74px; height: 74px; }
.app-icon svg.wide { width: 80px; margin-left: -4px; }
.petals rect { mix-blend-mode: multiply; fill-opacity: .88; }
.running::after { content: ""; position: absolute; left: 33px; top: 91px; width: 8px; height: 8px; border-radius: 50%; background: #0d0433; }
.sep { width: 19px; height: 90px; margin-top: -3px; flex: none; background: linear-gradient(#5c4b82, #5c4b82) 10px 0 / 2px 90px no-repeat; }
.shield { font: 700 11px "Liberation Sans", sans-serif; fill: #fff; }
.cal { width: 74px; height: 74px; border-radius: 17px; overflow: hidden; background: #fafafa; display: flex; flex-direction: column; align-items: center; }
.cal b { width: 74px; height: 23px; background: #e4594c; color: #fff; font: 600 15px/25px "Inter", sans-serif; text-align: center; }
.cal span { font: 300 45px/48px "Inter", sans-serif; color: #222; }
.badge { position: absolute; right: -11px; top: -10px; width: 34px; height: 34px; border-radius: 50%; background: #e35245; color: #fff; font: 20px/34px "Inter", sans-serif; text-align: center; }
```
